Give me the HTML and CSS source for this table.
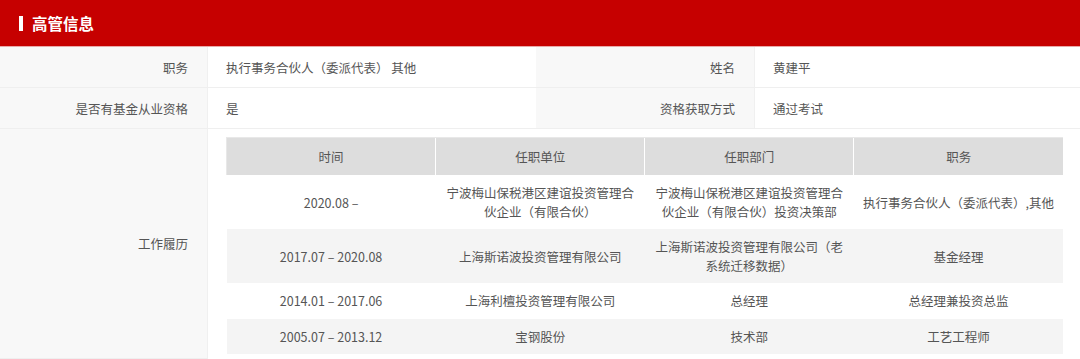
FILE: index.html
```html
<!DOCTYPE html>
<html lang="zh-CN">
<head>
<meta charset="utf-8">
<title>高管信息</title>
<link rel="stylesheet" href="styles.css">
</head>
<body>
<div class="panel">
  <div class="panel-head"><span class="bar"></span><span class="title">高管信息</span></div>
  <div class="info">
    <div class="label">职务</div>
    <div class="value">执行事务合伙人（委派代表） 其他</div>
    <div class="label">姓名</div>
    <div class="value">黄建平</div>

    <div class="label">是否有基金从业资格</div>
    <div class="value">是</div>
    <div class="label">资格获取方式</div>
    <div class="value">通过考试</div>

    <div class="label label-tall">工作履历</div>
    <div class="value value-wide">
      <table class="history">
        <thead>
          <tr><th>时间</th><th>任职单位</th><th>任职部门</th><th>职务</th></tr>
        </thead>
        <tbody>
          <tr><td>2020.08 –</td><td>宁波梅山保税港区建谊投资管理合伙企业（有限合伙）</td><td>宁波梅山保税港区建谊投资管理合伙企业（有限合伙）投资决策部</td><td>执行事务合伙人（委派代表）,其他</td></tr>
          <tr><td>2017.07 – 2020.08</td><td>上海斯诺波投资管理有限公司</td><td>上海斯诺波投资管理有限公司（老系统迁移数据）</td><td>基金经理</td></tr>
          <tr><td>2014.01 – 2017.06</td><td>上海利檀投资管理有限公司</td><td>总经理</td><td>总经理兼投资总监</td></tr>
          <tr><td>2005.07 – 2013.12</td><td>宝钢股份</td><td>技术部</td><td>工艺工程师</td></tr>
        </tbody>
      </table>
    </div>
  </div>
</div>
</body>
</html>
```

FILE: styles.css
```css
html, body {
  margin: 0;
  padding: 0;
  background: #fff;
}
body {
  font-family: "Noto Sans CJK SC", "Noto Sans", sans-serif;
  font-size: 12.5px;
  color: #555;
  width: 1080px;
  height: 359px;
  overflow: hidden;
}
.panel-head {
  height: 46px;
  background: #c60000;
  border-bottom: 1px solid #e9a9a9;
  display: flex;
  align-items: center;
  padding-left: 19px;
}
.bar {
  width: 4px;
  height: 15px;
  background: #fff;
  margin-right: 9px;
}
.title {
  color: #fff;
  font-weight: bold;
  font-size: 15.5px;
}
.info {
  display: grid;
  grid-template-columns: 208px 328px 219px 1fr;
  grid-auto-rows: 41px;
}
.label, .value {
  display: flex;
  align-items: center;
  border-bottom: 1px solid #efefef;
  line-height: 19px;
}
.label {
  background: #f8f8f8;
  justify-content: flex-end;
  padding-right: 19px;
  border-right: 1px solid #f0f0f0;
}
.value {
  padding-left: 18px;
  background: #fff;
}
.label-tall {
  height: 229px;
}
.value-wide {
  grid-column: span 3;
  height: 229px;
  align-items: flex-start;
  padding: 8px 17px 0 18px;
}
.history {
  width: 100%;
  border-collapse: collapse;
  table-layout: fixed;
  text-align: center;
  font-size: 12.5px;
  color: #555;
}
.history th {
  background: #dddddd;
  font-weight: normal;
  height: 37px;
  padding: 0 6px;
  line-height: 19px;
  border-left: 1px solid #fff;
  border-top: 1px solid #e8e8e8;
}
.history th:first-child {
  border-left: 1px solid #e8e8e8;
}
.history td {
  padding: 8px 5px;
  line-height: 19px;
}
.history tbody tr:nth-child(1) td { height: 38px; }
.history tbody tr:nth-child(2) td { height: 36px; }
.history tbody tr:nth-child(3) td { height: 19px; padding: 8px 5px 9px; }
.history tbody tr:nth-child(4) td { height: 19px; }
.history tbody tr:nth-child(even) td {
  background: #f4f4f4;
}
```
